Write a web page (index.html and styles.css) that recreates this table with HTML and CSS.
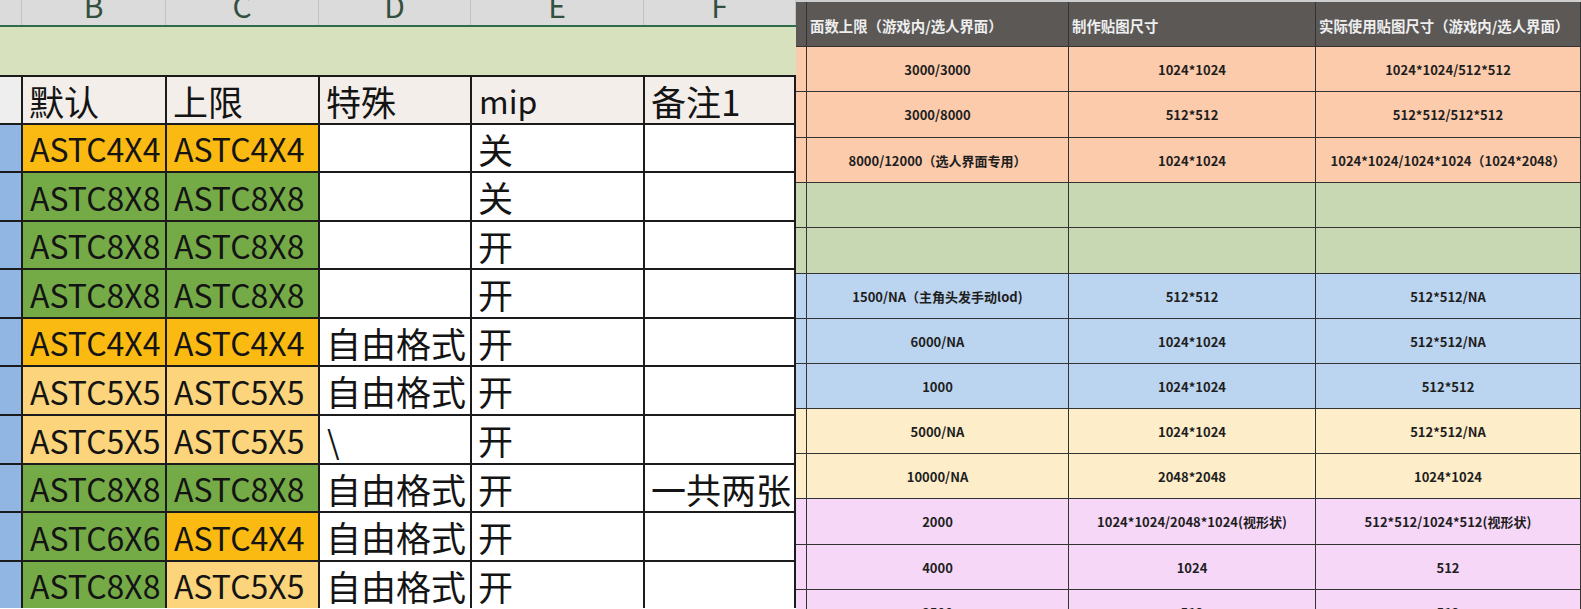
FILE: index.html
```html
<!DOCTYPE html>
<html lang="zh-CN">
<head>
<meta charset="utf-8">
<title>贴图规格</title>
<link rel="stylesheet" href="styles.css">
</head>
<body>
<div class="page">
  <section class="sheet">
    <div class="colheads">
      <div class="ch"></div>
      <div class="ch">B</div>
      <div class="ch">C</div>
      <div class="ch">D</div>
      <div class="ch">E</div>
      <div class="ch">F</div>
    </div>
    <div class="band"></div>
    <div class="grid">
      <div class="rh rh-head"></div><div class="c head">默认</div><div class="c head">上限</div><div class="c head">特殊</div><div class="c head lat">mip</div><div class="c head">备注1</div>

      <div class="rh"></div><div class="c lat orange">ASTC4X4</div><div class="c lat orange">ASTC4X4</div><div class="c"></div><div class="c">关</div><div class="c"></div>
      <div class="rh"></div><div class="c lat green">ASTC8X8</div><div class="c lat green">ASTC8X8</div><div class="c"></div><div class="c">关</div><div class="c"></div>
      <div class="rh"></div><div class="c lat green">ASTC8X8</div><div class="c lat green">ASTC8X8</div><div class="c"></div><div class="c">开</div><div class="c"></div>
      <div class="rh"></div><div class="c lat green">ASTC8X8</div><div class="c lat green">ASTC8X8</div><div class="c"></div><div class="c">开</div><div class="c"></div>
      <div class="rh"></div><div class="c lat orange">ASTC4X4</div><div class="c lat orange">ASTC4X4</div><div class="c">自由格式</div><div class="c">开</div><div class="c"></div>
      <div class="rh"></div><div class="c lat gold">ASTC5X5</div><div class="c lat gold">ASTC5X5</div><div class="c">自由格式</div><div class="c">开</div><div class="c"></div>
      <div class="rh"></div><div class="c lat gold">ASTC5X5</div><div class="c lat gold">ASTC5X5</div><div class="c lat">\</div><div class="c">开</div><div class="c"></div>
      <div class="rh"></div><div class="c lat green">ASTC8X8</div><div class="c lat green">ASTC8X8</div><div class="c">自由格式</div><div class="c">开</div><div class="c">一共两张</div>
      <div class="rh"></div><div class="c lat green">ASTC6X6</div><div class="c lat orange">ASTC4X4</div><div class="c">自由格式</div><div class="c">开</div><div class="c"></div>
      <div class="rh"></div><div class="c lat green">ASTC8X8</div><div class="c lat gold">ASTC5X5</div><div class="c">自由格式</div><div class="c">开</div><div class="c"></div>
    </div>
  </section>

  <section class="spec">
    <div class="sgrid">
      <div class="s hd"></div><div class="s hd">面数上限（游戏内/选人界面）</div><div class="s hd">制作贴图尺寸</div><div class="s hd">实际使用贴图尺寸（游戏内/选人界面）</div>

      <div class="s peach"></div><div class="s peach">3000/3000</div><div class="s peach">1024*1024</div><div class="s peach">1024*1024/512*512</div>
      <div class="s peach"></div><div class="s peach">3000/8000</div><div class="s peach">512*512</div><div class="s peach">512*512/512*512</div>
      <div class="s peach"></div><div class="s peach">8000/12000（选人界面专用）</div><div class="s peach">1024*1024</div><div class="s peach">1024*1024/1024*1024（1024*2048）</div>
      <div class="s sage"></div><div class="s sage"></div><div class="s sage"></div><div class="s sage"></div>
      <div class="s sage"></div><div class="s sage"></div><div class="s sage"></div><div class="s sage"></div>
      <div class="s sky"></div><div class="s sky">1500/NA（主角头发手动lod)</div><div class="s sky">512*512</div><div class="s sky">512*512/NA</div>
      <div class="s sky"></div><div class="s sky">6000/NA</div><div class="s sky">1024*1024</div><div class="s sky">512*512/NA</div>
      <div class="s sky"></div><div class="s sky">1000</div><div class="s sky">1024*1024</div><div class="s sky">512*512</div>
      <div class="s cream"></div><div class="s cream">5000/NA</div><div class="s cream">1024*1024</div><div class="s cream">512*512/NA</div>
      <div class="s cream"></div><div class="s cream">10000/NA</div><div class="s cream">2048*2048</div><div class="s cream">1024*1024</div>
      <div class="s pink"></div><div class="s pink">2000</div><div class="s pink">1024*1024/2048*1024(视形状)</div><div class="s pink">512*512/1024*512(视形状)</div>
      <div class="s pink"></div><div class="s pink">4000</div><div class="s pink">1024</div><div class="s pink">512</div>
      <div class="s pink"></div><div class="s pink">2500</div><div class="s pink">512</div><div class="s pink">512</div>
    </div>
  </section>
</div>
</body>
</html>
```

FILE: styles.css
```css
html, body {
  margin: 0;
  padding: 0;
  background: #ffffff;
}

body {
  overflow: hidden;
}

.page {
  display: flex;
  width: 1581px;
  height: 609px;
  overflow: hidden;
}

/* ---------- left: spreadsheet ---------- */
.sheet {
  flex: none;
  width: 796px;
  font-family: "Noto Sans CJK SC", "Noto Sans", sans-serif;
  color: #141414;
}

.colheads {
  display: grid;
  grid-template-columns: 22px 144px 153px 152px 173px 152px;
  height: 25px;
  background: #dbdbdb;
  border-bottom: 2px solid #2f6b4a;
  overflow: hidden;
}

.ch {
  box-sizing: border-box;
  border-right: 1px solid #c2c2c2;
  display: flex;
  justify-content: center;
  align-items: flex-start;
  font-size: 30px;
  line-height: 10px;
  color: #33503f;
  overflow: hidden;
}

.band {
  height: 48px;
  background: #d7e1bd;
}

.grid {
  display: grid;
  grid-template-columns: 21px 142px 151px 150px 171px 149px;
  grid-template-rows: 46px 46px 47px 46px 47px 46px 47px 47px 46px 47px 46px;
  column-gap: 2px;
  row-gap: 2px;
  padding: 2px 2px 0 0;
  background: #1b1b1b;
}

.rh {
  background: #92b6e3;
}

.rh-head {
  background: #eeeeee;
}

.c {
  display: flex;
  align-items: center;
  padding-left: 6px;
  font-size: 35px;
  line-height: 1;
  white-space: nowrap;
  overflow: hidden;
  background: #ffffff;
}

.c.lat {
  font-size: 32px;
  padding-left: 7px;
}

.c.head {
  background: #f3eee9;
}

.c.orange {
  background: #fbba12;
}

.c.gold {
  background: #fbd47c;
}

.c.green {
  background: #75ab47;
}

/* ---------- right: spec table ---------- */
.spec {
  flex: none;
  width: 785px;
  border-top: 2px solid #cfcfcf;
  font-family: "Noto Sans CJK SC", "Noto Sans", sans-serif;
  font-weight: 700;
  font-size: 13px;
  color: #1e1e1e;
}

.sgrid {
  display: grid;
  grid-template-columns: 10px 261px 246px 264px;
  grid-template-rows: 44px 44px 45px 44px 44px 45px 44px 44px 44px 44px 44px 45px 44px 44px;
  column-gap: 1px;
  row-gap: 1px;
  padding-right: 1px;
  background: #333333;
}

.s {
  display: flex;
  align-items: center;
  justify-content: center;
  white-space: nowrap;
  overflow: hidden;
}

.s.hd {
  justify-content: flex-start;
  padding-left: 3px;
  padding-top: 2px;
  font-size: 14.4px;
  background: #5b5856;
  color: #eeeeee;
}

.s.peach { background: #fbcbab; }
.s.sage  { background: #c7d8b3; }
.s.sky   { background: #bbd4ef; }
.s.cream { background: #fdedc8; }
.s.pink  { background: #f6d7f8; }
```
